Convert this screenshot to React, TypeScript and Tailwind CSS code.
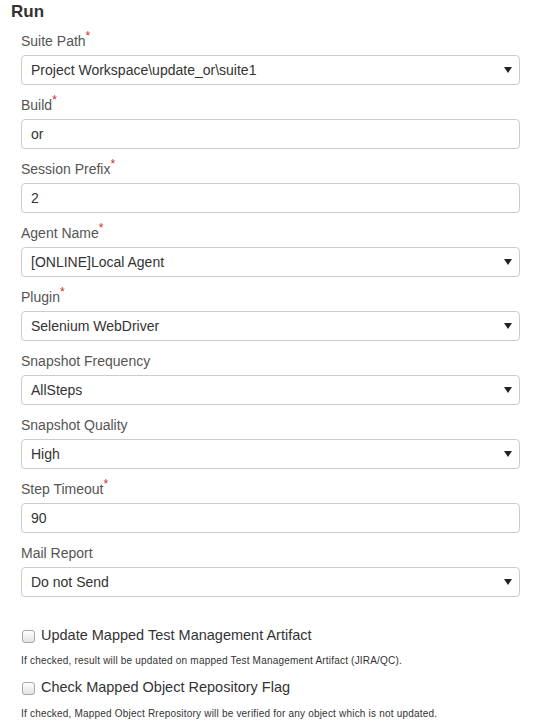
const fields: { label: string; value: string; required?: boolean; select?: boolean }[] = [
  { label: 'Suite Path', value: 'Project Workspace\\update_or\\suite1', required: true, select: true },
  { label: 'Build', value: 'or', required: true },
  { label: 'Session Prefix', value: '2', required: true },
  { label: 'Agent Name', value: '[ONLINE]Local Agent', required: true, select: true },
  { label: 'Plugin', value: 'Selenium WebDriver', required: true, select: true },
  { label: 'Snapshot Frequency', value: 'AllSteps', select: true },
  { label: 'Snapshot Quality', value: 'High', select: true },
  { label: 'Step Timeout', value: '90', required: true },
  { label: 'Mail Report', value: 'Do not Send', select: true },
];

const Checkbox = ({ label }: { label: string }) => (
  <div className="flex items-center h-5">
    <span className="ml-[1px] w-[13px] h-[13px] rounded-[3px] border border-[#a6a6a6] bg-gradient-to-b from-white to-[#e3e3e3]"></span>
    <span className="ml-[6px] text-[14.5px] text-[#333]">{label}</span>
  </div>
);

const App = () => {
  return (
    <div className="w-[535px] h-[725px] bg-white overflow-hidden px-[10px] pt-[2px]" style={{ fontFamily: '"Liberation Sans", Arial, sans-serif' }}>
      {/* Heading */}
      <h2 className="h-5 leading-5 text-[17px] font-bold text-[#333] pl-[1px]">Run</h2>

      <div className="mt-[9px] pl-[11px] pr-[5px]">
        {fields.map((f) => (
          <div key={f.label} className="mb-[10px]">
            <label className="flex h-5 leading-5 text-[14px] text-[#555] mb-1">
              {f.label}
              {f.required && <span className="text-[#c9302c] text-[12px] leading-[12px] -mt-[1px]">*</span>}
            </label>
            <div className="h-[30px] border border-[#ccc] rounded-[4px] flex items-center justify-between pl-[9px] pr-[7px] text-[14px] text-[#333]">
              <span>{f.value}</span>
              {f.select && (
                <svg width="8" height="6" viewBox="0 0 8 6">
                  <path d="M0 0 H8 L4 6 Z" fill="#222" />
                </svg>
              )}
            </div>
          </div>
        ))}

        {/* checkboxes */}
        <div className="mt-[29px]">
          <Checkbox label="Update Mapped Test Management Artifact" />
          <p className="mt-[8px] h-[14px] leading-[14px] text-[10px] tracking-[0.2px] text-[#333]">
            If checked, result will be updated on mapped Test Management Artifact (JIRA/QC).
          </p>
          <div className="mt-[10px]">
            <Checkbox label="Check Mapped Object Repository Flag" />
          </div>
          <p className="mt-[9px] h-[14px] leading-[14px] text-[10px] tracking-[0.2px] text-[#333]">
            If checked, Mapped Object Rrepository will be verified for any object which is not updated.
          </p>
        </div>
      </div>
    </div>
  );
};

export default App;
